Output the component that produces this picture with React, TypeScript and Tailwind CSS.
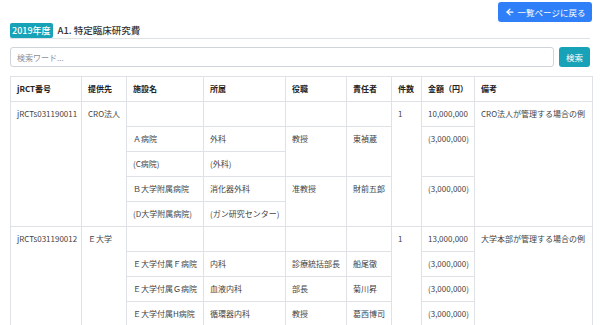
import { ArrowLeft } from "lucide-react";

type Sub = {
  facility: string;
  dept: string;
  title?: string;
  person?: string;
  amount?: string;
  span?: number;
};

type Group = {
  id: string;
  sponsor: string;
  count: string;
  total: string;
  note: string;
  subs: Sub[];
};

const groups: Group[] = [
  {
    id: "jRCTs031190011",
    sponsor: "CRO法人",
    count: "1",
    total: "10,000,000",
    note: "CRO法人が管理する場合の例",
    subs: [
      { facility: "Ａ病院", dept: "外科", title: "教授", person: "東禎蔵", amount: "(3,000,000)", span: 2 },
      { facility: "(C病院)", dept: "(外科)" },
      { facility: "Ｂ大学附属病院", dept: "消化器外科", title: "准教授", person: "財前五郎", amount: "(3,000,000)", span: 2 },
      { facility: "(D大学附属病院)", dept: "(ガン研究センター)" },
    ],
  },
  {
    id: "jRCTs031190012",
    sponsor: "Ｅ大学",
    count: "1",
    total: "13,000,000",
    note: "大学本部が管理する場合の例",
    subs: [
      { facility: "Ｅ大学付属Ｆ病院", dept: "内科", title: "診療統括部長", person: "船尾徹", amount: "(3,000,000)", span: 1 },
      { facility: "Ｅ大学付属Ｇ病院", dept: "血液内科", title: "部長", person: "菊川昇", amount: "(3,000,000)", span: 1 },
      { facility: "Ｅ大学付属H病院", dept: "循環器内科", title: "教授", person: "葛西博司", amount: "(3,000,000)", span: 1 },
    ],
  },
];

const headers = ["jRCT番号", "提供先", "施設名", "所属", "役職", "責任者", "件数", "金額（円）", "備考"];
const widths = [71, 45, 77, 82, 61, 45, 30, 53, 118];

const cell =
  "border border-[#dee2e6] pl-[6px] pr-0 pt-[6px] pb-[6px] align-top text-[8px] leading-[12px] text-left whitespace-nowrap overflow-visible";

export default function App() {
  return (
    <div className="w-[600px] h-[325px] overflow-hidden bg-white font-['Noto_Sans_CJK_JP',sans-serif] text-[#212529]">
      <div className="flex justify-end pt-[2px] pr-[8px]">
        <button className="h-[20px] w-[94px] rounded-[3px] bg-[#2f80f8] text-white text-[8.5px] flex items-center justify-center gap-[3px]">
          <ArrowLeft size={10} strokeWidth={3} />
          一覧ページに戻る
        </button>
      </div>

      <div className="mx-[10px] mt-[1px] flex items-end border-b border-[#dee2e6] h-[16px]">
        <span className="h-[15px] px-[2px] bg-[#17a2b8] text-white text-[9px] font-medium leading-[15px] rounded-[2px]">2019年度</span>
        <span className="ml-[5px] text-[9.5px] font-medium leading-[15px] text-[#333]">A1. 特定臨床研究費</span>
      </div>

      <div className="mx-[10px] mt-[8px] flex gap-[5px] h-[20px]">
        <input
          className="flex-1 h-[20px] border border-[#ced4da] rounded-[3px] px-[6px] text-[8px] placeholder:text-[#8a9096] outline-none"
          placeholder="検索ワード..."
        />
        <button className="w-[31px] h-[20px] rounded-[3px] bg-[#17a2b8] text-white text-[8.5px]">検索</button>
      </div>

      <table className="ml-[10px] mt-[9px] w-[582px] table-fixed border-collapse">
        <colgroup>
          {widths.map((w, i) => (
            <col key={i} style={{ width: w }} />
          ))}
        </colgroup>
        <thead>
          <tr>
            {headers.map((h) => (
              <th key={h} className={`${cell} font-bold text-[#222]`}>
                {h}
              </th>
            ))}
          </tr>
        </thead>
        <tbody className="text-[#444]">
          {groups.map((g) => (
            <>
              <tr key={g.id}>
                <td className={cell} rowSpan={g.subs.length + 1}>{g.id}</td>
                <td className={cell} rowSpan={g.subs.length + 1}>{g.sponsor}</td>
                <td className={cell}></td>
                <td className={cell}></td>
                <td className={cell}></td>
                <td className={cell}></td>
                <td className={cell} rowSpan={g.subs.length + 1}>{g.count}</td>
                <td className={cell}>{g.total}</td>
                <td className={cell} rowSpan={g.subs.length + 1}>{g.note}</td>
              </tr>
              {g.subs.map((s, i) => (
                <tr key={g.id + i}>
                  <td className={cell}>{s.facility}</td>
                  <td className={cell}>{s.dept}</td>
                  {s.span && (
                    <>
                      <td className={cell} rowSpan={s.span}>{s.title}</td>
                      <td className={cell} rowSpan={s.span}>{s.person}</td>
                      <td className={cell} rowSpan={s.span}>{s.amount}</td>
                    </>
                  )}
                </tr>
              ))}
            </>
          ))}
        </tbody>
      </table>
    </div>
  );
}
